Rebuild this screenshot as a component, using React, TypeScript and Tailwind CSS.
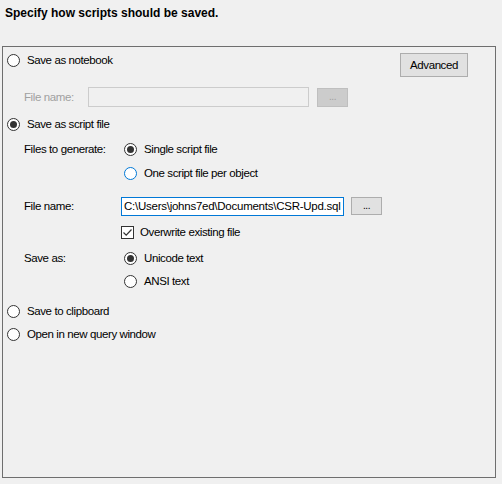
import React from "react";

function Radio({ checked, focus }: { checked?: boolean; focus?: boolean }) {
  return (
    <span
      className={
        "flex h-[13px] w-[13px] shrink-0 items-center justify-center rounded-full border bg-white " +
        (focus ? "border-[#0078d7]" : "border-[#333333]")
      }
    >
      {checked && <span className="h-[7px] w-[7px] rounded-full bg-[#333333]" />}
    </span>
  );
}

function RadioRow({
  label,
  checked,
  focus,
}: {
  label: string;
  checked?: boolean;
  focus?: boolean;
}) {
  return (
    <div className="flex h-[20px] items-center gap-[7px]">
      <Radio checked={checked} focus={focus} />
      <span>{label}</span>
    </div>
  );
}

function Checkbox() {
  return (
    <span className="flex h-[13px] w-[13px] shrink-0 items-center justify-center border border-[#333333] bg-white">
      <svg width="11" height="11" viewBox="0 0 11 11" fill="none">
        <path d="M1.5 5.5 L4.2 8.2 L9.5 2.5" stroke="#333333" strokeWidth="1.2" />
      </svg>
    </span>
  );
}

export default function App() {
  return (
    <div className="h-[484px] w-[502px] bg-[#f0f0f0] font-['Liberation_Sans',Arial,sans-serif] text-[11.5px] leading-[14px] tracking-[-0.4px] text-black">
      {/* Header */}
      <div className="px-[5px] pt-[6px] text-[12px] font-bold leading-[15px] tracking-normal">
        Specify how scripts should be saved.
      </div>

      {/* Options panel */}
      <div className="mx-[2px] mt-[25px] h-[432px] w-[494px] border border-[#6e6e6e]">
        {/* Notebook */}
        <div className="flex h-[26px] items-start justify-between pl-[4px] pr-[27px]">
          <div className="pt-[3px]">
            <RadioRow label="Save as notebook" />
          </div>
          <button className="mt-[6px] h-[24px] w-[68px] border border-[#adadad] bg-[#e1e1e1]">
            Advanced
          </button>
        </div>
        <div className="mt-[14px] flex h-[20px] items-center pl-[21px] text-[#a0a0a0]">
          <span className="w-[64px]">File name:</span>
          <div className="h-[20px] w-[221px] border border-[#cccccc] bg-[#f0f0f0]" />
          <div className="ml-[8px] flex h-[19px] w-[31px] items-center justify-center border border-[#bfbfbf] bg-[#cccccc] text-[10px] leading-none text-[#a0a0a0]">
            ...
          </div>
        </div>

        {/* Script file */}
        <div className="mt-[7px] pl-[4px]">
          <RadioRow label="Save as script file" checked />
        </div>
        <div className="mt-[5px] flex h-[20px] items-center pl-[21px]">
          <span className="w-[100px]">Files to generate:</span>
          <RadioRow label="Single script file" checked />
        </div>
        <div className="mt-[4px] pl-[121px]">
          <RadioRow label="One script file per object" focus />
        </div>
        <div className="mt-[14px] flex h-[18px] items-center pl-[21px]">
          <span className="w-[97px]">File name:</span>
          <div className="flex h-[19px] w-[223px] items-center overflow-hidden whitespace-nowrap border border-[#0078d7] bg-white pl-[2px] tracking-[-0.25px]">
            C:\Users\johns7ed\Documents\CSR-Upd.sql
          </div>
          <button className="ml-[7px] h-[18px] w-[31px] border border-[#adadad] bg-[#e1e1e1] text-[10px] leading-none">
            ...
          </button>
        </div>
        <div className="mt-[10px] flex h-[14px] items-center gap-[6px] pl-[118px]">
          <Checkbox />
          <span>Overwrite existing file</span>
        </div>
        <div className="mt-[9px] flex h-[20px] items-center pl-[21px]">
          <span className="w-[100px]">Save as:</span>
          <RadioRow label="Unicode text" checked />
        </div>
        <div className="mt-[3px] pl-[121px]">
          <RadioRow label="ANSI text" />
        </div>

        {/* Others */}
        <div className="mt-[10px] pl-[4px]">
          <RadioRow label="Save to clipboard" />
        </div>
        <div className="mt-[3px] pl-[4px]">
          <RadioRow label="Open in new query window" />
        </div>
      </div>
    </div>
  );
}
